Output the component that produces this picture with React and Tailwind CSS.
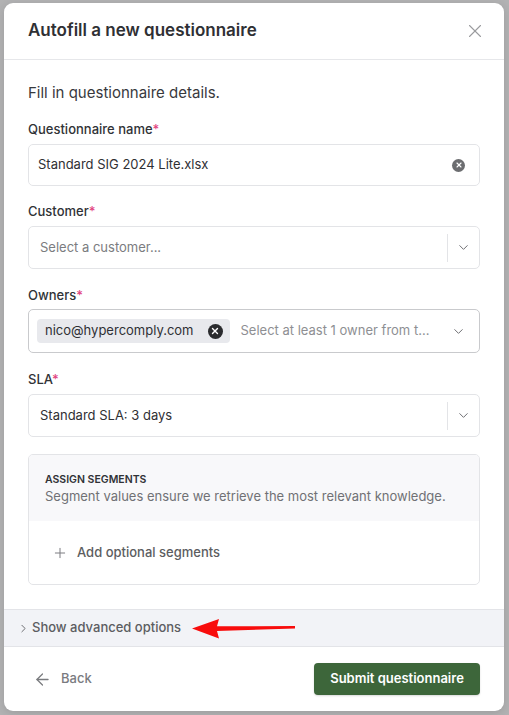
import React from "react";
import { X, ChevronDown, ChevronRight, Plus, ArrowLeft } from "lucide-react";

const Label = ({ children }) => (
  <div className="h-5 text-[13px] leading-5 font-medium text-[#303236]">
    {children}
    <span className="text-[#e2457f]">*</span>
  </div>
);

const ClearDot = ({ dark }) => (
  <span
    className={`flex items-center justify-center rounded-full ${
      dark ? "w-[15px] h-[15px] bg-[#2a2b2e]" : "w-[13px] h-[13px] bg-[#6c6d70]"
    }`}
  >
    <X size={dark ? 10 : 8} strokeWidth={3.2} className="text-white" />
  </span>
);

const SelectBox = ({ children, placeholder }) => (
  <div className="mt-[5px] h-[43px] rounded-[5px] border border-[#e3e4e7] bg-white flex items-center">
    <div
      className={`flex-1 pl-[11px] text-[13px] ${
        placeholder ? "text-[#7b7c80]" : "text-[#2f3034]"
      }`}
    >
      {children}
    </div>
    <div className="w-px h-[28px] bg-[#e3e4e7]" />
    <div className="w-[31px] flex justify-center">
      <ChevronDown size={15} strokeWidth={1.6} className="text-[#6f7074]" />
    </div>
  </div>
);

const RedArrow = () => (
  <svg
    className="absolute left-[186px] top-[8px]"
    width="108"
    height="22"
    viewBox="0 0 108 22"
  >
    <path
      d="M2 10.5 L29 1 L27 8.3 L105 8 L105 10.4 L27 13 L29 20.5 Z"
      fill="#f80c0c"
    />
  </svg>
);

export default function App() {
  return (
    <div
      className="w-[509px] h-[715px] bg-[#b2b2b3] pt-[3px] pl-[4px]"
      style={{ fontFamily: "Inter, 'Noto Sans', sans-serif" }}
    >
      <div className="w-[500px] h-[708px] bg-white rounded-[9px] flex flex-col overflow-hidden shadow-[0_2px_8px_rgba(0,0,0,0.12)]">
        <div className="h-[57px] shrink-0 px-6 flex items-center justify-between border-b border-[#e6e7ea]">
          <div className="text-[17px] font-semibold text-[#2f3034]">
            Autofill a new questionnaire
          </div>
          <X size={22} strokeWidth={1.2} className="text-[#9a9b9e] mr-[-6px]" />
        </div>

        <div className="px-6 pt-[21px]">
          <div className="text-[15px] leading-6 text-[#38393d]">
            Fill in questionnaire details.
          </div>

          <div className="mt-[14px]">
            <Label>Questionnaire name</Label>
            <div className="mt-[5px] h-[42px] rounded-[5px] border border-[#e3e4e7] flex items-center justify-between pl-[9px] pr-[14px]">
              <span className="text-[13px] text-[#2f3034]">Standard SIG 2024 Lite.xlsx</span>
              <ClearDot />
            </div>
          </div>

          <div className="mt-[15px]">
            <Label>Customer</Label>
            <SelectBox placeholder>Select a customer...</SelectBox>
          </div>

          <div className="mt-[16px]">
            <Label>Owners</Label>
            <div className="mt-[4px] h-[44px] rounded-[5px] border border-[#c9cacd] flex items-center pl-[8px] pr-[13px]">
              <div className="h-[24px] pl-[8px] pr-[7px] rounded-[4px] bg-[#e8e9ed] flex items-center gap-[14px]">
                <span className="text-[13px] text-[#2f3034]">nico@hypercomply.com</span>
                <ClearDot dark />
              </div>
              <span className="ml-[11px] flex-1 text-[13px] text-[#8e8f93] whitespace-nowrap">
                Select at least 1 owner from t...
              </span>
              <ChevronDown size={15} strokeWidth={1.6} className="text-[#6f7074]" />
            </div>
          </div>

          <div className="mt-[16px]">
            <Label>SLA</Label>
            <SelectBox>Standard SLA: 3 days</SelectBox>
          </div>

          <div className="mt-[17px] h-[131px] rounded-[5px] border border-[#e3e4e7] overflow-hidden flex flex-col">
            <div className="h-[66px] bg-[#f8f8fa] pl-[16px] pt-[17px]">
              <div className="text-[10.5px] leading-[15px] font-semibold text-[#303236]">
                ASSIGN SEGMENTS
              </div>
              <div className="text-[13px] leading-[18px] text-[#707175]">
                Segment values ensure we retrieve the most relevant knowledge.
              </div>
            </div>
            <div className="flex-1 flex items-center pl-[23px] gap-[9px]">
              <Plus size={16} strokeWidth={1.5} className="text-[#7c7d81]" />
              <span className="text-[13px] font-medium text-[#5c5d61]">Add optional segments</span>
            </div>
          </div>
        </div>

        <div className="relative mt-[24px] h-[38px] shrink-0 bg-[#f2f3f7] border-y border-[#e3e4e8] flex items-center pl-[13px] gap-[2px]">
          <ChevronRight size={13} strokeWidth={1.8} className="text-[#6a6b6f]" />
          <span className="text-[13px] font-medium text-[#5c5d61]">Show advanced options</span>
          <RedArrow />
        </div>

        <div className="flex-1 flex items-center justify-between pl-[29px] pr-6">
          <div className="flex items-center gap-[9px] text-[#7a7b7f]">
            <ArrowLeft size={19} strokeWidth={1.6} />
            <span className="text-[13px] font-medium">Back</span>
          </div>
          <div className="h-[32px] w-[166px] justify-center rounded-[4px] bg-[#3d663a] flex items-center text-white text-[13px] font-semibold shadow-[0_1px_2px_rgba(0,0,0,0.15)]">
            Submit questionnaire
          </div>
        </div>
      </div>
    </div>
  );
}
